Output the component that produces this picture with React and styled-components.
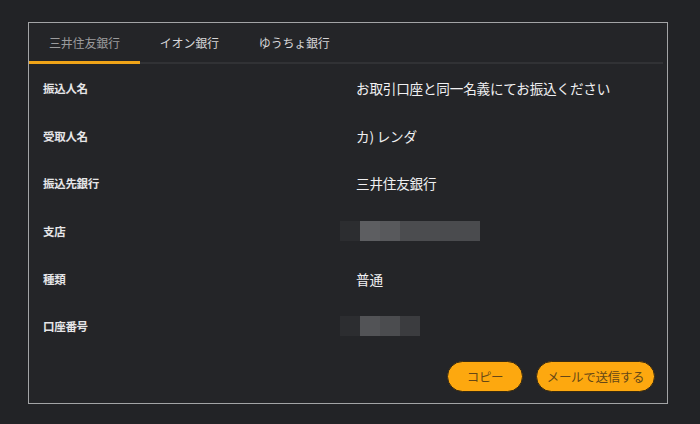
import React, { useState } from 'react';
import styled, { createGlobalStyle } from 'styled-components';

const GlobalStyle = createGlobalStyle`
  html, body {
    margin: 0;
    padding: 0;
    background: #222326;
  }
  body {
    font-family: "Noto Sans CJK JP", "Noto Sans", sans-serif;
    width: 700px;
    height: 424px;
    overflow: hidden;
  }
`;

const Page = styled.div`
  padding: 22px 0 0 28px;
`;

const Panel = styled.div`
  width: 638px;
  height: 380px;
  border: 1px solid #a3a4a6;
  background: #242528;
  display: flex;
  flex-direction: column;
`;

const TabBar = styled.div`
  display: flex;
  height: 39px;
  margin-right: 4px;
  border-bottom: 2px solid #313235;
`;

const Tab = styled.button`
  appearance: none;
  background: none;
  border: none;
  padding: 0 20px;
  margin-bottom: -2px;
  height: 41px;
  font-family: inherit;
  font-size: 12px;
  letter-spacing: -0.2px;
  color: ${p => (p.$active ? '#9c9c9e' : '#d6d6d8')};
  border-bottom: 3px solid ${p => (p.$active ? '#f0a418' : 'transparent')};
  cursor: pointer;
`;

const Rows = styled.div`
  display: flex;
  flex-direction: column;
`;

const Row = styled.div`
  display: grid;
  grid-template-columns: 313px 1fr;
  align-items: center;
  height: 47.7px;
  padding-left: 14px;
`;

const Label = styled.div`
  font-size: 11.5px;
  font-weight: 700;
  color: #e6e6e8;
  letter-spacing: -0.3px;
`;

const Value = styled.div`
  font-size: 13.6px;
  color: #f0f0f2;
  letter-spacing: -0.2px;
`;

const Mosaic = styled.div`
  display: flex;
  height: 20px;
  margin-left: -16px;
`;

const Cell = styled.div`
  width: ${p => p.$w || 20}px;
  background: ${p => p.$c};
`;

const Actions = styled.div`
  display: flex;
  justify-content: flex-end;
  gap: 13px;
  padding: 11px 12px 0 0;
`;

const Button = styled.button`
  appearance: none;
  width: ${p => p.$w}px;
  height: 31px;
  padding: 0;
  border-radius: 16px;
  border: 1px solid #3a2b10;
  background: #fda80f;
  color: #654716;
  font-family: inherit;
  font-size: 12.5px;
  letter-spacing: -0.3px;
  cursor: pointer;
`;

const tabs = ['三井住友銀行', 'イオン銀行', 'ゆうちょ銀行'];

const branchCells = [
  ['#2c2d30', 20], ['#5d5e61', 20], ['#58595c', 20], ['#4b4c4f', 40], ['#4a4b4e', 40],
];
const accountCells = [
  ['#2c2d30', 20], ['#525356', 20], ['#4b4c4f', 20], ['#3b3c3f', 20],
];

const renderMosaic = cells => (
  <Mosaic>
    {cells.map(([c, w], i) => <Cell key={i} $c={c} $w={w} />)}
  </Mosaic>
);

const rows = [
  { label: '振込人名', value: 'お取引口座と同一名義にてお振込ください' },
  { label: '受取人名', value: 'カ) レンダ' },
  { label: '振込先銀行', value: '三井住友銀行' },
  { label: '支店', mosaic: branchCells },
  { label: '種類', value: '普通' },
  { label: '口座番号', mosaic: accountCells },
];

const App = () => {
  const [active, setActive] = useState(0);

  return (
    <>
      <GlobalStyle />
      <Page>
        <Panel>
          <TabBar>
            {tabs.map((t, i) => (
              <Tab key={t} $active={i === active} onClick={() => setActive(i)}>
                {t}
              </Tab>
            ))}
          </TabBar>
          <Rows>
            {rows.map(r => (
              <Row key={r.label}>
                <Label>{r.label}</Label>
                {r.mosaic ? renderMosaic(r.mosaic) : <Value>{r.value}</Value>}
              </Row>
            ))}
          </Rows>
          <Actions>
            <Button $w={76}>コピー</Button>
            <Button $w={119}>メールで送信する</Button>
          </Actions>
        </Panel>
      </Page>
    </>
  );
};

export default App;
